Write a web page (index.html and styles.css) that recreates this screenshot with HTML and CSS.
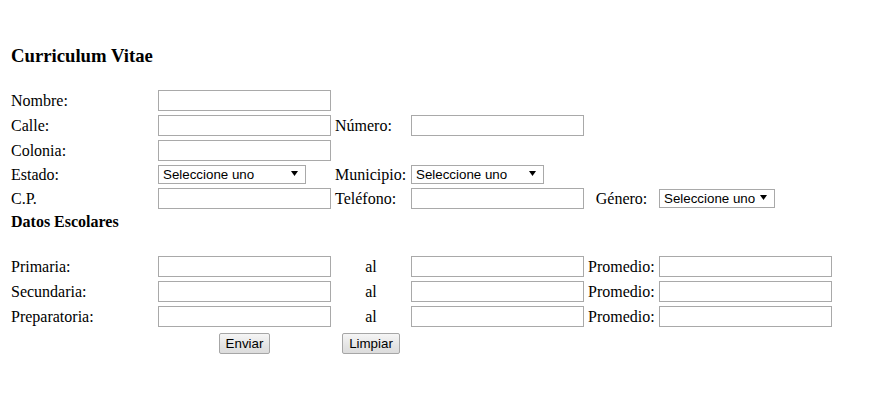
FILE: index.html
```html
<!DOCTYPE html>
<html lang="es">
<head>
<meta charset="utf-8">
<title>Curriculum Vitae</title>
<link rel="stylesheet" href="styles.css">
</head>
<body>
<form class="cv-form">
<table class="cv">
  <tr>
    <td><h3 class="title">Curriculum Vitae</h3></td>
  </tr>
  <tr>
    <td>Nombre:</td>
    <td><input class="field" type="text"></td>
  </tr>
  <tr>
    <td>Calle:</td>
    <td><input class="field" type="text"></td>
    <td>Número:</td>
    <td><input class="field" type="text"></td>
  </tr>
  <tr>
    <td>Colonia:</td>
    <td><input class="field" type="text"></td>
  </tr>
  <tr>
    <td>Estado:</td>
    <td><span class="sel sel-estado"><select><option>Seleccione uno</option></select></span></td>
    <td>Municipio:</td>
    <td><span class="sel sel-municipio"><select><option>Seleccione uno</option></select></span></td>
  </tr>
  <tr>
    <td>C.P.</td>
    <td><input class="field" type="text"></td>
    <td>Teléfono:</td>
    <td><input class="field" type="text"></td>
    <td class="center">Género:</td>
    <td><span class="sel sel-genero"><select><option>Seleccione uno</option></select></span></td>
  </tr>
  <tr>
    <td class="section">Datos Escolares</td>
  </tr>
  <tr>
    <td><div class="spacer"></div></td>
  </tr>
  <tr>
    <td class="w1">Primaria:</td>
    <td class="w2"><input class="field" type="text"></td>
    <td class="w3 center">al</td>
    <td class="w4"><input class="field" type="text"></td>
    <td class="w5">Promedio:</td>
    <td class="w6"><input class="field" type="text"></td>
  </tr>
  <tr>
    <td>Secundaria:</td>
    <td><input class="field" type="text"></td>
    <td class="center">al</td>
    <td><input class="field" type="text"></td>
    <td>Promedio:</td>
    <td><input class="field" type="text"></td>
  </tr>
  <tr>
    <td>Preparatoria:</td>
    <td><input class="field" type="text"></td>
    <td class="center">al</td>
    <td><input class="field" type="text"></td>
    <td>Promedio:</td>
    <td><input class="field" type="text"></td>
  </tr>
  <tr>
    <td></td>
    <td><button class="btn" type="submit">Enviar</button></td>
    <td><button class="btn" type="reset">Limpiar</button></td>
  </tr>
</table>
</form>
</body>
</html>
```

FILE: styles.css
```css
html, body {
  background: #fff;
}
body {
  margin: 8px;
  font-family: "Liberation Serif", "Times New Roman", serif;
  font-size: 16px;
  color: #000;
}
.cv-form {
  margin: 0;
}
.cv {
  border-collapse: separate;
  border-spacing: 2px;
}
.cv td {
  padding: 1px;
  line-height: 18px;
  vertical-align: middle;
  text-align: left;
}
.cv td.center {
  text-align: center;
}
.w1 { width: 143px; }
.w2 { width: 173px; }
.w3 { width: 72px; }
.w4 { width: 173px; }
.w5 { width: 67px; }
.w6 { width: 173px; }

.title {
  margin: 34px 0 19px;
  font-size: 18.72px;
  line-height: 22px;
  font-weight: bold;
  white-space: nowrap;
}
.section {
  font-weight: bold;
  white-space: nowrap;
}
.spacer {
  height: 17px;
}
.field {
  display: block;
  box-sizing: border-box;
  width: 173px;
  height: 21px;
  margin: 0;
  padding: 1px 2px;
  border: 1px solid #a9a9a9;
  background: #fff;
  font-family: "Liberation Sans", Arial, sans-serif;
  font-size: 13.33px;
}
.sel {
  display: block;
  position: relative;
}
.sel-estado { width: 148px; }
.sel-municipio { width: 133px; }
.sel-genero { width: 116px; }
.sel select {
  display: block;
  box-sizing: border-box;
  width: 100%;
  height: 19px;
  margin: 0;
  padding: 0 0 0 4px;
  border: 1px solid #a9a9a9;
  border-radius: 0;
  background: #fff;
  color: #000;
  font-family: "Liberation Sans", Arial, sans-serif;
  font-size: 13.33px;
  -webkit-appearance: none;
  appearance: none;
}
.sel::after {
  content: "";
  position: absolute;
  right: 8px;
  top: 6px;
  width: 7px;
  height: 5px;
  background: #000;
  clip-path: polygon(0 0, 100% 0, 50% 100%);
  pointer-events: none;
}
.btn {
  display: block;
  box-sizing: border-box;
  height: 21px;
  margin: 2px auto 0;
  padding: 0 6px;
  border: 1px solid #a6a6a6;
  border-radius: 2px;
  background: linear-gradient(#f5f5f5, #e4e4e4 60%, #dcdcdc);
  color: #000;
  font-family: "Liberation Sans", Arial, sans-serif;
  font-size: 13.33px;
  line-height: 19px;
}
```
